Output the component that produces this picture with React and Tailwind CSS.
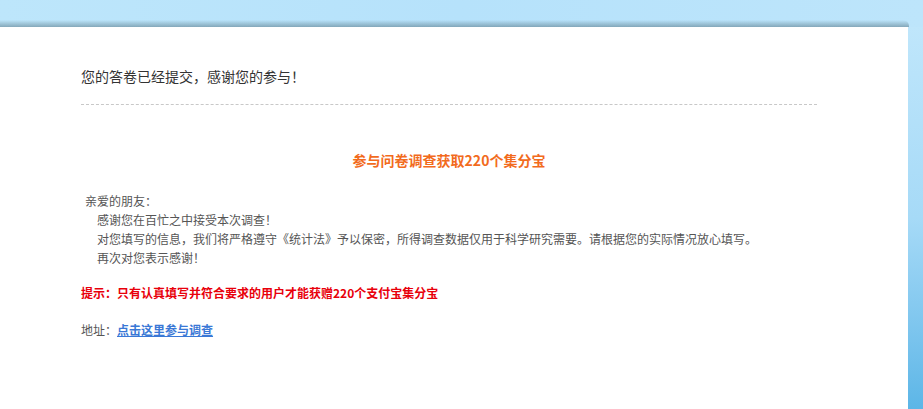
import React from 'react';

function App() {
  return (
    <div className="min-h-[409px] h-[409px] overflow-hidden bg-[#b9e4fb] flex flex-col" style={{ fontFamily: '"Microsoft YaHei", "Noto Sans CJK SC", "Liberation Sans", sans-serif' }}>
      {/* Top band with shadow */}
      <div className="h-[27px] flex flex-col justify-end bg-gradient-to-r from-[#bde6fb] via-[#b6e2fb] to-[#bde5fb]">
        <div className="h-[7px] mr-[14px] bg-gradient-to-b from-transparent to-[#5f7f8e]/60 rounded-tr-[6px]" />
      </div>

      <div className="flex flex-1">
        {/* Main white panel */}
        <div className="flex-1 bg-white pl-[81px] pt-[39px]">
          <div className="w-[736px]">
            <p className="text-[14px] leading-[20px] text-[#333]">您的答卷已经提交，感谢您的参与！</p>
            <div className="mt-[18px] border-t border-dashed border-[#c8c8c8]" />

            <h2 className="mt-[45px] text-center text-[14px] leading-[20px] font-bold text-[#f26b1d]">
              参与问卷调查获取220个集分宝
            </h2>

            <div className="mt-[21px] text-[12px] leading-[19px] text-[#555]">
              <p className="pl-[4px]">亲爱的朋友：</p>
              <p className="pl-[16px]">感谢您在百忙之中接受本次调查！</p>
              <p className="pl-[16px]">对您填写的信息，我们将严格遵守《统计法》予以保密，所得调查数据仅用于科学研究需要。请根据您的实际情况放心填写。</p>
              <p className="pl-[16px]">再次对您表示感谢！</p>
            </div>

            <p className="mt-[16px] text-[12px] leading-[19px] font-bold text-[#e8000b]">
              提示：只有认真填写并符合要求的用户才能获赠220个支付宝集分宝
            </p>

            <p className="mt-[18px] text-[12px] leading-[19px] text-[#555]">
              地址：<a href="#" className="font-bold text-[#3a78d6] underline">点击这里参与调查</a>
            </p>
          </div>
        </div>

        {/* Right blue strip */}
        <div className="w-[15px] bg-gradient-to-b from-[#bfe6fb] via-[#a6daf7] to-[#5cb6e7]" />
      </div>
    </div>
  );
}

export default App;
